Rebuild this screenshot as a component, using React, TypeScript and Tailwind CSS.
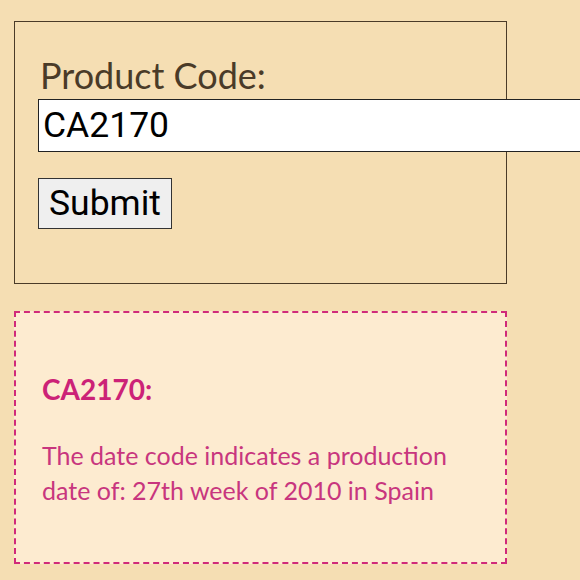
export default function App() {
  return (
    <div className="min-h-[580px] w-[580px] overflow-hidden bg-[#f5deb3] pt-[21px] pl-[14px]">
      <form
        className="w-[493px] h-[263px] border border-[#4a3b28] pl-[23px] pt-[30px] box-border"
        onSubmit={(e) => e.preventDefault()}
      >
        <label className="block pl-[2px] text-[36px] leading-[47px] text-[#4a3b28] font-['Lato',sans-serif]">
          Product Code:
        </label>
        <input
          defaultValue="CA2170"
          className="block w-[560px] h-[53px] bg-white border border-[#222] px-[4px] text-[35.5px] text-black font-['Roboto',sans-serif] outline-none"
        />
        <button
          type="submit"
          className="mt-[26px] block h-[51px] px-[10px] bg-[#efefef] border border-[#333] text-[35.5px] leading-none text-black font-['Roboto',sans-serif]"
        >
          Submit
        </button>
      </form>

      <div className="mt-[27px] w-[493px] h-[253px] border-2 border-dashed border-[#d02a7a] bg-[#fdebd0] px-[26px] pt-[58px] box-border">
        <h2 className="text-[28px] leading-[36px] font-bold text-[#cc2277] font-['Lato',sans-serif]">
          CA2170:
        </h2>
        <p className="mt-[31px] text-[25px] leading-[35px] text-[#c8367e] font-['Lato',sans-serif]">
          The date code indicates a production date of: 27th week of 2010 in Spain
        </p>
      </div>
    </div>
  );
}
